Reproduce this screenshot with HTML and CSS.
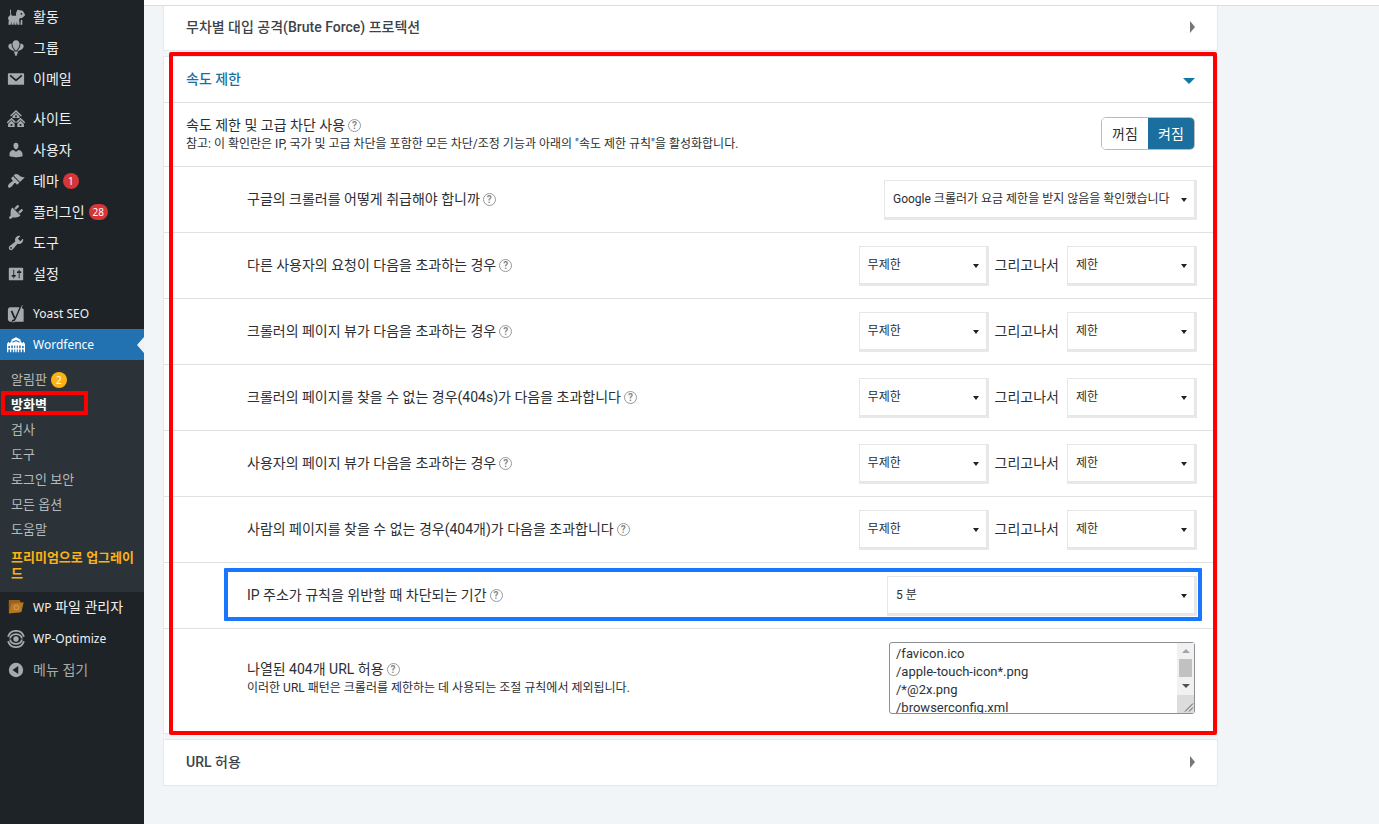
FILE: index.html
```html
<!DOCTYPE html>
<html lang="ko">
<head>
    <meta charset="UTF-8">
    <meta name="viewport" content="width=device-width, initial-scale=1.0">
    <title>Wordfence 방화벽</title>
    <link rel="stylesheet" href="styles.css">
</head>
<body>
    <nav class="sidebar">
        <ul class="menu">
            <li><a href="#"><svg class="icon" viewBox="0 0 20 20"><path d="M4.500 2v4.500l1 2H14V12l-.5 1 .5 5.500h-2.500L11 15l-.5 3.500H8.200L8 15l-.8 3.500H5L4.800 15l-.8 3.500H1.500L2 14l-1-3 1.500-2.500 1.200-.5-.4-6zM15.500 13l1.500.2V18.500h-2.200z"/><circle cx="14.500" cy="7" r="4.500"/><circle cx="18" cy="7.500" r="2"/><circle cx="12.500" cy="3.500" r="1.500"/><circle class="hole" cx="16" cy="6.500" r="1"/></svg>활동</a></li>
            <li><a href="#"><svg class="icon" viewBox="0 0 20 20"><path d="M10 1.500c2.600 0 4 2 4 4.300 0 2.700-2.200 5.800-4 7.200-1.800-1.400-4-4.500-4-7.200 0-2.300 1.400-4.300 4-4.300zM5 5c0 3.500 1.500 6 3.700 8.200C5 13 1.500 10.800 1.500 8 1.500 6.200 3 5 5 5zM15 5c2 0 3.500 1.200 3.500 3 0 2.800-3.500 5-7.200 5.200C13.500 11 15 8.500 15 5z"/><path d="M7.500 14h5L10.500 19h-1z"/></svg>그룹</a></li>
            <li><a href="#"><svg class="icon" viewBox="0 0 20 20"><path d="M2 3.500h16c.6 0 1 .4 1 1v11c0 .6-.4 1-1 1H2c-.6 0-1-.4-1-1v-11c0-.6.4-1 1-1z"/><path class="cut" d="M3.500 6l6.500 5.500L16.500 6"/></svg>이메일</a></li>
            <li class="separator"></li>
            <li><a href="#"><svg class="icon" viewBox="0 0 20 20"><path d="M10 0l6.500 6-1 1.100L14 5.900V9H6V5.900L4.500 7.100l-1-1.100zM5 8.500l5 4.700 5-4.700 5.500 5.300-1 1-.7-.4V19h-7.300v-4.600L10 13.500l-1.500.9V19H1.200v-4.600l-.7.4-1-1z"/><path class="cut thin" d="M5.500 7L10 2.800 14.500 7M.8 15.300L5 11.500l4.200 3.800M10.800 15.300l4.200-3.800 4.200 3.800"/><path class="hole" d="M9 6h2v2H9zM4 15.500h2v2H4zM14 15.500h2v2h-2z"/></svg>사이트</a></li>
            <li><a href="#"><svg class="icon" viewBox="0 0 20 20"><path d="M10 9.250c-2.270 0-2.730-3.440-2.730-3.440C7 4.020 7.820 2 9.970 2c2.160 0 2.980 2.020 2.710 3.810 0 0-.41 3.440-2.680 3.440zm0 2.570L12.720 10c2.390 0 4.520 2.330 4.520 4.530v2.490s-3.650 1.130-7.240 1.130c-3.650 0-7.240-1.130-7.240-1.130v-2.490c0-2.250 1.940-4.480 4.470-4.480z"/></svg>사용자</a></li>
            <li><a href="#"><svg class="icon" viewBox="0 0 20 20"><path d="M14.480 11.060L7.410 3.990l1.500-1.500c.5-.56 2.300-.47 3.510.32 1.210.8 1.430 1.280 2.910 2.100 1.180.64 2.450 1.260 4.450.85zm-.71.71L6.700 4.700 4.930 6.470c-.39.39-.39 1.020 0 1.410l1.060 1.060c.39.39.39 1.030 0 1.420-.6.6-1.430 1.110-2.210 1.690-.35.26-.7.530-1.010.84C1.430 14.230.4 16.080 1.400 17.070c.99 1 2.840-.03 4.180-1.360.31-.31.58-.66.85-1.020.57-.78 1.080-1.610 1.690-2.210.39-.39 1.020-.39 1.410 0l1.060 1.060c.39.39 1.020.39 1.410 0z"/></svg>테마<span class="badge">1</span></a></li>
            <li><a href="#"><svg class="icon" viewBox="0 0 20 20"><path d="M13.110 4.360L9.870 7.600 8 5.730l3.240-3.240c.35-.34 1.050-.2 1.560.32.52.51.66 1.210.31 1.550zm-8 1.770l.91-1.120 9.010 9.010-1.190.84c-.71.71-2.630 1.160-3.820 1.160H6.140L4.900 17.260c-.59.59-1.540.59-2.120 0-.59-.58-.59-1.530 0-2.120l1.240-1.240v-3.880c0-1.130.4-3.190 1.090-3.890zm7.260 3.970l3.240-3.240c.34-.35 1.040-.21 1.550.31.52.51.66 1.210.31 1.550l-3.240 3.250z"/></svg>플러그인<span class="badge">28</span></a></li>
            <li><a href="#"><svg class="icon" viewBox="0 0 20 20"><path d="M16.680 9.770c-1.340 1.340-3.300 1.670-4.950.99l-5.410 6.520c-.99.99-2.590.99-3.580 0s-.99-2.590 0-3.570l6.520-5.420c-.68-1.650-.35-3.610.99-4.950 1.280-1.280 3.120-1.620 4.720-1.060l-2.890 2.890 2.820 2.820 2.860-2.870c.53 1.580.18 3.390-1.080 4.650zM3.810 16.210c.4.39 1.040.39 1.430 0 .4-.4.4-1.040 0-1.430-.39-.4-1.030-.4-1.430 0-.39.39-.39 1.030 0 1.430z"/></svg>도구</a></li>
            <li><a href="#"><svg class="icon" viewBox="0 0 20 20"><path d="M18 16V4c0-.55-.45-1-1-1H3c-.55 0-1 .45-1 1v12c0 .55.45 1 1 1h14c.55 0 1-.45 1-1zM8 11h1c.55 0 1 .45 1 1s-.45 1-1 1H8v1.500c0 .28-.22.5-.5.5s-.5-.22-.5-.5V13H6c-.55 0-1-.45-1-1s.45-1 1-1h1V5.500c0-.28.22-.5.5-.5s.5.22.5.5V11zm5-2h-1c-.55 0-1-.45-1-1s.45-1 1-1h1V5.500c0-.28.22-.5.5-.5s.5.22.5.5V7h1c.55 0 1 .45 1 1s-.45 1-1 1h-1v5.500c0 .28-.22.5-.5.5s-.5-.22-.5-.5V9z"/></svg>설정</a></li>
            <li class="separator"></li>
            <li><a href="#" class="latin"><svg class="icon" viewBox="0 0 20 20"><path d="M3.500 2.500H16L18.500 5v13.500H4c-1.800 0-3-1.300-3-3V5.500c0-1.700 1-3 2.500-3z"/><path class="cut" d="M5 6.500l3.500 8M16 0L9.800 14.500c-1 2.200-1.800 3.200-4.300 3.300"/><path class="pen" d="M17 .5l-6.500 15c-1 2.300-2.200 3.200-4.500 3.500"/></svg>Yoast SEO</a></li>
            <li><a href="#" class="latin active"><svg class="icon" viewBox="0 0 20 20"><path d="M0 9l1.500-2.500L3 8l2-2.500V4l5-2.500L15 4v1.500L17 8l1.500-1.500L20 9v9h-1.500v-7h-1.800v7h-1.500v-7.500h-1.700V18H12v-7.500h-1.200V18H9.200v-7.500H8V18H6.500v-7.500H4.800V18H3.300v-7H1.500v7H0z"/><path class="hole" d="M6 6.500l4-2 4 2v1l-4-1.800-4 1.800z"/><path d="M1 13.500h18V15H1z"/></svg>Wordfence</a>
                <ul class="submenu">
                    <li><a href="#">알림판<span class="badge warn">2</span></a></li>
                    <li class="current"><a href="#">방화벽</a></li>
                    <li><a href="#">검사</a></li>
                    <li><a href="#">도구</a></li>
                    <li><a href="#">로그인 보안</a></li>
                    <li><a href="#">모든 옵션</a></li>
                    <li><a href="#">도움말</a></li>
                    <li class="premium"><a href="#">프리미엄으로 업그레이드</a></li>
                </ul>
            </li>
            <li><a href="#"><svg class="icon folder" viewBox="0 0 20 20"><path class="back" d="M2 1h12l1 2v12H2z"/><path class="front" d="M5 5l13.500-1.500-2.500 11L2 16z"/><circle class="mark" cx="10.500" cy="9.500" r="2.500"/></svg><span><span class="latin">WP</span> 파일 관리자</span></a></li>
            <li><a href="#" class="latin"><svg class="icon ring" viewBox="0 0 20 20"><path d="M1.200 7.500A9.200 9.200 0 0 1 18.800 7.500M18.800 12.500A9.200 9.200 0 0 1 1.200 12.500"/><path d="M3.500 9.500A6.500 5 0 0 1 16.500 9.500M16.500 10.500A6.500 5 0 0 1 3.500 10.500"/><circle cx="10" cy="10" r="3"/></svg>WP-Optimize</a></li>
            <li class="collapse"><a href="#"><svg class="icon" viewBox="0 0 20 20"><circle cx="10" cy="10" r="8"/><path class="hole" d="M12.500 5.500v9L6 10z"/></svg>메뉴 접기</a></li>
        </ul>
    </nav>

    <div class="page">
        <div class="topbar"></div>
        <main class="content">
            <section class="panel">
                <h2 class="panel-title">무차별 대입 공격(Brute Force) 프로텍션 <span class="arrow-right"></span></h2>
            </section>

            <section class="panel rate-limit">
                <h2 class="panel-title open">속도 제한 <span class="arrow-down"></span></h2>

                <div class="row main-option">
                    <div class="label">
                        <div>속도 제한 및 고급 차단 사용<a href="#" class="help">?</a></div>
                        <p class="note">참고: 이 확인란은 IP, 국가 및 고급 차단을 포함한 모든 차단/조정 기능과 아래의 "속도 제한 규칙"을 활성화합니다.</p>
                    </div>
                    <div class="toggle">
                        <button type="button">꺼짐</button>
                        <button type="button" class="on">켜짐</button>
                    </div>
                </div>

                <div class="row">
                    <div class="label"><label for="google">구글의 크롤러를 어떻게 취급해야 합니까</label><a href="#" class="help">?</a></div>
                    <div class="select wide">
                        <select id="google"><option>Google 크롤러가 요금 제한을 받지 않음을 확인했습니다</option></select>
                    </div>
                </div>

                <div class="row">
                    <div class="label"><label for="requests">다른 사용자의 요청이 다음을 초과하는 경우</label><a href="#" class="help">?</a></div>
                    <div class="select"><select id="requests"><option>무제한</option></select></div>
                    <label class="then" for="requestsAction">그리고나서</label>
                    <div class="select"><select id="requestsAction"><option>제한</option></select></div>
                </div>

                <div class="row">
                    <div class="label"><label for="crawlerViews">크롤러의 페이지 뷰가 다음을 초과하는 경우</label><a href="#" class="help">?</a></div>
                    <div class="select"><select id="crawlerViews"><option>무제한</option></select></div>
                    <label class="then" for="crawlerViewsAction">그리고나서</label>
                    <div class="select"><select id="crawlerViewsAction"><option>제한</option></select></div>
                </div>

                <div class="row">
                    <div class="label"><label for="crawler404">크롤러의 페이지를 찾을 수 없는 경우(404s)가 다음을 초과합니다</label><a href="#" class="help">?</a></div>
                    <div class="select"><select id="crawler404"><option>무제한</option></select></div>
                    <label class="then" for="crawler404Action">그리고나서</label>
                    <div class="select"><select id="crawler404Action"><option>제한</option></select></div>
                </div>

                <div class="row">
                    <div class="label"><label for="humanViews">사용자의 페이지 뷰가 다음을 초과하는 경우</label><a href="#" class="help">?</a></div>
                    <div class="select"><select id="humanViews"><option>무제한</option></select></div>
                    <label class="then" for="humanViewsAction">그리고나서</label>
                    <div class="select"><select id="humanViewsAction"><option>제한</option></select></div>
                </div>

                <div class="row">
                    <div class="label"><label for="human404">사람의 페이지를 찾을 수 없는 경우(404개)가 다음을 초과합니다</label><a href="#" class="help">?</a></div>
                    <div class="select"><select id="human404"><option>무제한</option></select></div>
                    <label class="then" for="human404Action">그리고나서</label>
                    <div class="select"><select id="human404Action"><option>제한</option></select></div>
                </div>

                <div class="row block-time">
                    <div class="label"><label for="blockTime">IP 주소가 규칙을 위반할 때 차단되는 기간</label><a href="#" class="help">?</a></div>
                    <div class="select wide">
                        <select id="blockTime"><option>5 분</option></select>
                    </div>
                </div>

                <div class="row allowed">
                    <div class="label">
                        <div><label for="allowed404">나열된 404개 URL 허용</label><a href="#" class="help">?</a></div>
                        <p class="note">이러한 URL 패턴은 크롤러를 제한하는 데 사용되는 조절 규칙에서 제외됩니다.</p>
                    </div>
                    <div class="url-list">
                        <textarea id="allowed404" spellcheck="false">/favicon.ico
/apple-touch-icon*.png
/*@2x.png
/browserconfig.xml</textarea>
                        <div class="scrollbar" aria-hidden="true">
                            <span class="scroll-up"></span>
                            <span class="thumb"></span>
                            <span class="scroll-down"></span>
                            <svg class="grip" viewBox="0 0 17 17"><path d="M8 16l8-8M12 16l4-4"/></svg>
                        </div>
                    </div>
                </div>
            </section>

            <section class="panel">
                <h2 class="panel-title">URL 허용 <span class="arrow-right"></span></h2>
            </section>
        </main>
    </div>
</body>
</html>
```

FILE: styles.css
```css
* {
    box-sizing: border-box;
}

body {
    display: flex;
    min-height: 100vh;
    margin: 0;
    background: #f1f5f8;
    color: #2c2f33;
    font-family: Roboto, "Noto Sans CJK KR", sans-serif;
    font-size: 14px;
    line-height: 20px;
}

a {
    color: inherit;
    text-decoration: none;
}

/* Sidebar */
.sidebar {
    flex: 0 0 144px;
    background: #1d2327;
    color: #f0f0f1;
    font-family: "Noto Sans", "Noto Sans CJK KR", sans-serif;
}

.menu, .submenu {
    list-style: none;
    margin: 0;
    padding: 0;
}

.menu {
    padding-top: 1px;
}

.menu > li > a {
    display: flex;
    align-items: center;
    height: 31px;
    padding-left: 7px;
}

.latin {
    font-size: 12px;
}

.menu > .separator {
    height: 9px;
}

.icon {
    flex: none;
    width: 18px;
    height: 18px;
    margin-right: 8px;
    fill: #a7aaad;
}

.icon .hole {
    fill: #1d2327;
}

.icon .cut {
    fill: none;
    stroke: #1d2327;
    stroke-width: 2;
}

.icon .thin {
    stroke-width: 1;
}

.icon .pen {
    fill: none;
    stroke: #a7aaad;
    stroke-width: 1;
}

.icon.ring path {
    fill: none;
    stroke: #a7aaad;
    stroke-width: 2;
}

.folder .back {
    fill: #9c5f1e;
}

.folder .front {
    fill: #b9781f;
}

.folder .mark {
    fill: none;
    stroke: #d0a468;
}

.menu .active {
    position: relative;
    background: #2271b1;
    color: #fff;
}

.active .icon {
    fill: #fff;
}

.active .icon .hole {
    fill: #2271b1;
}

.active::after {
    content: "";
    position: absolute;
    right: 0;
    top: 8px;
    border: 8px solid transparent;
    border-left-width: 0;
    border-right: 7px solid #f1f1f1;
}

.badge {
    min-width: 16px;
    height: 16px;
    margin-left: 4px;
    padding: 0 4px;
    border-radius: 8px;
    background: #d63638;
    color: #fff;
    font-size: 10px;
    font-weight: normal;
    line-height: 16px;
    text-align: center;
}

.badge.warn {
    display: inline-block;
    background: #fcb214;
}

.submenu {
    padding: 7px 0;
    background: #2c3338;
    color: #b4b9be;
    font-size: 13px;
    line-height: 17px;
}

.submenu li {
    position: relative;
    padding: 4px 9px 4px 11px;
}

.submenu .current {
    color: #fff;
    font-weight: bold;
}

.submenu .current::after {
    content: "";
    position: absolute;
    inset: -1px 56px 2px 1px;
    border: 4px solid #ff0000;
    border-radius: 1px;
}

.submenu .premium {
    padding-top: 7px;
    color: #fcb214;
    font-weight: bold;
    line-height: 16px;
    word-break: break-all;
}

.collapse {
    color: #a7aaad;
}

/* Content */
.page {
    flex: 1;
    min-width: 0;
}

.topbar {
    position: relative;
    z-index: 1;
    height: 6px;
    background: #fff;
    border-bottom: 1px solid #dcdfe2;
}

.content {
    display: flex;
    flex-direction: column;
    gap: 5px;
    margin-top: -1px;
    padding: 0 161px 20px 19px;
}

.panel {
    position: relative;
    background: #fff;
    border: 1px solid #e2e8ed;
}

.panel:first-child {
    border-top: 0;
}

.panel-title {
    display: flex;
    align-items: center;
    justify-content: space-between;
    height: 45px;
    margin: 0;
    padding: 0 22px 2px 22px;
    color: #3c434a;
    font-size: 14px;
    font-weight: 500;
}

.panel-title.open {
    color: #1b6f9f;
}

.arrow-right {
    border: 6px solid transparent;
    border-left: 5px solid #777;
    border-right: 0;
}

.arrow-down {
    margin-top: 4px;
    border: 6px solid transparent;
    border-top: 6px solid #1178a5;
    border-bottom: 0;
}

.row {
    position: relative;
    display: flex;
    align-items: center;
    gap: 8px;
    height: 66px;
    padding: 0 22px 2px 83px;
    border-top: 1px solid #dfe1e3;
}

.main-option {
    height: 64px;
    padding-left: 22px;
}

.label {
    flex: 1;
}

.note {
    margin: 0;
    font-size: 12px;
    line-height: 18px;
}

.help {
    display: inline-block;
    width: 13px;
    height: 13px;
    margin-left: 3px;
    border: 1px solid #999;
    border-radius: 50%;
    color: #888;
    font-size: 10px;
    font-weight: bold;
    line-height: 11px;
    text-align: center;
    vertical-align: 1px;
}

.select {
    position: relative;
    width: 128px;
}

.select.wide {
    width: 311px;
}

.block-time .select.wide {
    width: 308px;
}

.select::after {
    content: "";
    position: absolute;
    right: 8px;
    top: 18px;
    border: 3px solid transparent;
    border-top: 4px solid #222;
    border-bottom: 0;
    pointer-events: none;
}

select {
    display: block;
    width: 100%;
    height: 38px;
    padding: 0 8px;
    appearance: none;
    background: #fff;
    border: 1px solid #e6e6e6;
    border-radius: 0;
    box-shadow: 1px 1px 0 1px #e8e8e8;
    color: #2c2f33;
    font-family: inherit;
    font-size: 12px;
}

.toggle {
    display: flex;
    height: 33px;
    border: 1px solid #bbb;
    border-radius: 5px;
    overflow: hidden;
}

.toggle button {
    width: 46px;
    padding: 0 0 2px;
    background: #fff;
    border: 0;
    color: #2c2f33;
    font-family: inherit;
    font-size: 14px;
}

.toggle .on {
    background: #1b6f9f;
    color: #fff;
}

.url-list {
    position: relative;
}

textarea {
    display: block;
    width: 306px;
    height: 72px;
    padding: 2px 24px 2px 6px;
    overflow: hidden;
    resize: none;
    border: 1px solid #8c8f94;
    border-radius: 3px;
    color: #2c3338;
    font-family: inherit;
    font-size: 13px;
    line-height: 18px;
}

.scrollbar {
    position: absolute;
    inset: 1px 1px 1px auto;
    display: flex;
    flex-direction: column;
    align-items: center;
    width: 17px;
    background: #f1f1f1;
}

.scroll-up, .scroll-down {
    border: 4px solid transparent;
}

.scroll-up {
    margin: 6px 0;
    border-top: 0;
    border-bottom-color: #a3a3a3;
}

.scroll-down {
    margin: 7px 0;
    border-bottom: 0;
    border-top-color: #505050;
}

.thumb {
    width: 13px;
    height: 18px;
    background: #c1c1c1;
}

.grip {
    width: 17px;
    height: 18px;
    background: #dcdcdc;
    fill: none;
    stroke: #555;
}

.allowed {
    height: 105px;
    padding-bottom: 6px;
}

/* Highlight frames */
.rate-limit::after {
    content: "";
    position: absolute;
    inset: -5px 0 -2px 5px;
    border: 4px solid #ff0000;
    border-radius: 2px;
    pointer-events: none;
}

.block-time::after {
    content: "";
    position: absolute;
    inset: 5px 15px 7px 60px;
    border: 4px solid #1877ff;
    border-radius: 1px;
    pointer-events: none;
}
```
